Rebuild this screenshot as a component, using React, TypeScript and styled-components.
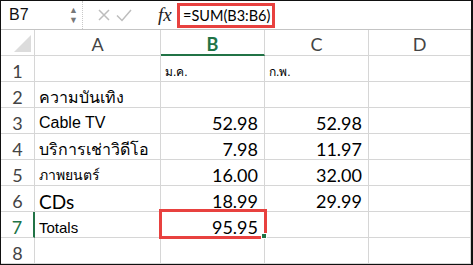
import React from 'react';
import styled, { createGlobalStyle } from 'styled-components';

const Global = createGlobalStyle`
  html, body { margin: 0; padding: 0; background: #fff; }
  body { font-family: "Liberation Sans", Arial, sans-serif; }
`;

const GREEN = '#217346';
const GRID = '#d6d6d6';

const Frame = styled.div`
  width: 473px;
  height: 265px;
  box-sizing: border-box;
  border-top: 1px solid #111;
  border-left: 1px solid #111;
  border-right: 2px solid #111;
  border-bottom: 1px solid #111;
  overflow: hidden;
  display: flex;
  flex-direction: column;
  background: #fff;
`;

const FormulaBar = styled.div`
  height: 28px;
  flex: none;
  display: flex;
  align-items: center;
  border-bottom: 1px solid #c4c4c4;
`;

const NameBox = styled.div`
  width: 82px;
  height: 100%;
  box-sizing: border-box;
  display: flex;
  align-items: center;
  justify-content: space-between;
  padding: 0 4px 0 8px;
  font-size: 16px;
  color: #111;
  border-right: 1px dotted #c8c8c8;
`;

const Spinner = styled.div`
  display: flex;
  flex-direction: column;
  gap: 2px;
  font-size: 9px;
  line-height: 8px;
  color: #777;
`;

const IconGroup = styled.div`
  display: flex;
  align-items: center;
  padding-left: 15px;
  width: 94px;
  box-sizing: border-box;
`;

const Fx = styled.span`
  font-family: "Liberation Serif", serif;
  font-style: italic;
  font-size: 19px;
  color: #222;
  margin-left: 26px;
`;

const FormulaBox = styled.div`
  height: 25px;
  box-sizing: border-box;
  border: 3px solid #e8413f;
  display: flex;
  align-items: center;
  padding: 1px 2px 0 3px;
  font-family: Lato, "Liberation Sans", sans-serif;
  font-size: 14.5px;
  color: #000;
`;

const Grid = styled.div`
  display: grid;
  grid-template-columns: 34px 126px 104px 104px 1fr;
  grid-template-rows: 26px repeat(8, 26px);
`;

const Cell = styled.div<{ $align?: 'left' | 'right' | 'center' }>`
  position: relative;
  box-sizing: border-box;
  border-right: 1px solid ${GRID};
  border-bottom: 1px solid ${GRID};
  display: flex;
  align-items: center;
  justify-content: ${({ $align }) =>
    $align === 'right' ? 'flex-end' : $align === 'center' ? 'center' : 'flex-start'};
  padding: 5px 4px 0 4px;
  white-space: nowrap;
  overflow: visible;
`;

const ColHead = styled(Cell)<{ $active?: boolean }>`
  font-family: Lato, "Liberation Sans", sans-serif;
  font-size: 18px;
  padding-top: 3px;
  color: ${({ $active }) => ($active ? GREEN : '#444')};
  font-weight: ${({ $active }) => ($active ? 700 : 400)};
  border-bottom: ${({ $active }) => ($active ? `2px solid ${GREEN}` : `1px solid ${GRID}`)};
`;

const Corner = styled(Cell)`
  &::after {
    content: '';
    position: absolute;
    right: 3px;
    bottom: 3px;
    width: 0;
    height: 0;
    border-left: 17px solid transparent;
    border-bottom: 17px solid #dcdcdc;
  }
`;

const RowHead = styled(Cell)<{ $active?: boolean }>`
  font-family: Lato, "Liberation Sans", sans-serif;
  font-size: 18px;
  padding-top: 4px;
  color: ${({ $active }) => ($active ? GREEN : '#444')};
  border-right: ${({ $active }) => ($active ? `2px solid ${GREEN}` : `1px solid ${GRID}`)};
`;

const Text = styled.span<{ $size?: number; $weight?: number; $calibri?: boolean }>`
  font-family: ${({ $calibri }) =>
    $calibri ? 'Lato, "Liberation Sans", sans-serif' : '"Liberation Sans", Arial, sans-serif'};
  font-size: ${({ $size }) => $size ?? 16}px;
  font-weight: ${({ $weight }) => $weight ?? 400};
  color: #000;
`;

const Num = styled(Text).attrs({ $calibri: true, $size: 18 })`
  padding-right: 2px;
`;

const Selected = styled(Cell)`
  border-bottom: 2px solid ${GREEN};
  &::before {
    content: '';
    position: absolute;
    right: -3px;
    bottom: -3px;
    width: 4px;
    height: 4px;
    background: ${GREEN};
    border: 1px solid #fff;
    z-index: 2;
  }
  &::after {
    content: '';
    position: absolute;
    left: -2px;
    top: -3px;
    right: -3px;
    bottom: -3px;
    border: 3px solid #e8413f;
    z-index: 1;
  }
`;

const XIcon = () => (
  <svg width="12" height="12" viewBox="0 0 12 12" style={{ marginRight: 6 }}>
    <path d="M1 1 L11 11 M11 1 L1 11" stroke="#bdbdbd" strokeWidth="1.5" fill="none" />
  </svg>
);

const CheckIcon = () => (
  <svg width="16" height="13" viewBox="0 0 16 13">
    <path d="M1 6.5 L6 11.5 L15 1" stroke="#bdbdbd" strokeWidth="1.5" fill="none" />
  </svg>
);

type Row = { a?: React.ReactNode; b?: React.ReactNode; c?: React.ReactNode };

const rows: Row[] = [
  {
    b: <Text $size={12}>ม.ค.</Text>,
    c: <Text $size={12}>ก.พ.</Text>,
  },
  { a: <Text $size={16}>ความบันเทิง</Text> },
  { a: <Text $size={16}>Cable TV</Text>, b: <Num>52.98</Num>, c: <Num>52.98</Num> },
  { a: <Text $size={16}>บริการเช่าวิดีโอ</Text>, b: <Num>7.98</Num>, c: <Num>11.97</Num> },
  { a: <Text $size={14}>ภาพยนตร์</Text>, b: <Num>16.00</Num>, c: <Num>32.00</Num> },
  { a: <Text $size={19} $calibri>CDs</Text>, b: <Num>18.99</Num>, c: <Num>29.99</Num> },
  { a: <Text $size={15}>Totals</Text>, b: <Num>95.95</Num> },
  {},
];

const App: React.FC = () => (
  <>
    <Global />
    <Frame>
      <FormulaBar>
        <NameBox>
          B7
          <Spinner>
            <span>▲</span>
            <span>▼</span>
          </Spinner>
        </NameBox>
        <IconGroup>
          <XIcon />
          <CheckIcon />
          <Fx>fx</Fx>
        </IconGroup>
        <FormulaBox>=SUM(B3:B6)</FormulaBox>
      </FormulaBar>
      <Grid>
        <Corner />
        <ColHead $align="center">A</ColHead>
        <ColHead $align="center" $active>B</ColHead>
        <ColHead $align="center">C</ColHead>
        <ColHead $align="center">D</ColHead>
        {rows.map((r, i) => {
          const n = i + 1;
          const active = n === 7;
          const BCell = active ? Selected : Cell;
          return (
            <React.Fragment key={n}>
              <RowHead $align="center" $active={active}>{n}</RowHead>
              <Cell>{r.a}</Cell>
              <BCell $align={n === 1 ? 'left' : 'right'}>{r.b}</BCell>
              <Cell $align={n === 1 ? 'left' : 'right'}>{r.c}</Cell>
              <Cell />
            </React.Fragment>
          );
        })}
      </Grid>
    </Frame>
  </>
);

export default App;
